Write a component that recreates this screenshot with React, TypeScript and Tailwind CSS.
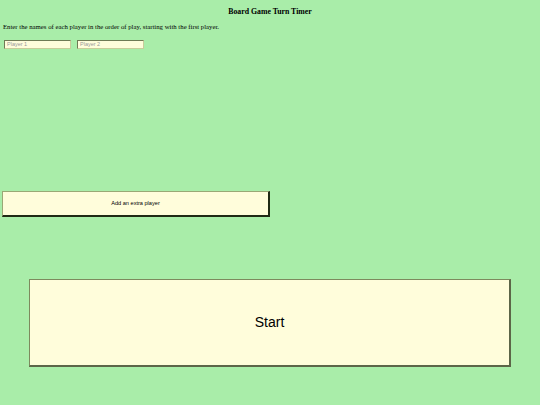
import React, { useState } from 'react';

export default function App() {
  const [players, setPlayers] = useState(['', '']);

  return (
    <div className="min-h-[405px] w-full bg-[#a9eda9] font-['Liberation_Serif',serif] text-black">
      <div className="flex h-[24px] items-end justify-center pb-[8px]">
        <h1 className="text-[7.8px] font-bold leading-none">Board Game Turn Timer</h1>
      </div>
      <p className="ml-[3px] text-[6.75px] leading-none">
        Enter the names of each player in the order of play, starting with the first player.
      </p>
      <div className="mt-[9px] flex h-[151px] items-start gap-[6px] pl-[4px]">
        {players.map((p, i) => (
          <input
            key={i}
            value={p}
            onChange={(e) => setPlayers(prev => prev.map((v, j) => (j === i ? e.target.value : v)))}
            placeholder={`Player ${i + 1}`}
            className="h-[9px] w-[67px] border border-t-[#6f7a55] border-l-[#6f7a55] border-b-[#c9cc9a] border-r-[#c9cc9a] bg-[#fffddb] px-[2px] font-['Liberation_Sans',sans-serif] text-[5.5px] leading-none outline-none placeholder:text-[#999]"
          />
        ))}
      </div>
      <div className="pl-[2px]">
        <button
          onClick={() => setPlayers(prev => [...prev, ''])}
          className="flex h-[26px] w-[268px] items-center justify-center border border-t-[#9aa875] border-l-[#9aa875] border-b-[2px] border-r-[2px] border-b-[#1f2a14] border-r-[#1f2a14] bg-[#fffddb] pt-[2px] font-['Liberation_Sans',sans-serif] text-[5.6px] leading-none"
        >
          Add an extra player
        </button>
      </div>
      <div className="mt-[62px] flex justify-center">
        <button className="flex h-[88px] w-[482px] items-center justify-center border border-t-[#7d8a5e] border-l-[#7d8a5e] border-b-[2px] border-r-[2px] border-b-[#5c6648] border-r-[#5c6648] bg-[#fffddb] font-['Liberation_Sans',sans-serif] text-[14px] leading-none">
          Start
        </button>
      </div>
    </div>
  );
}
